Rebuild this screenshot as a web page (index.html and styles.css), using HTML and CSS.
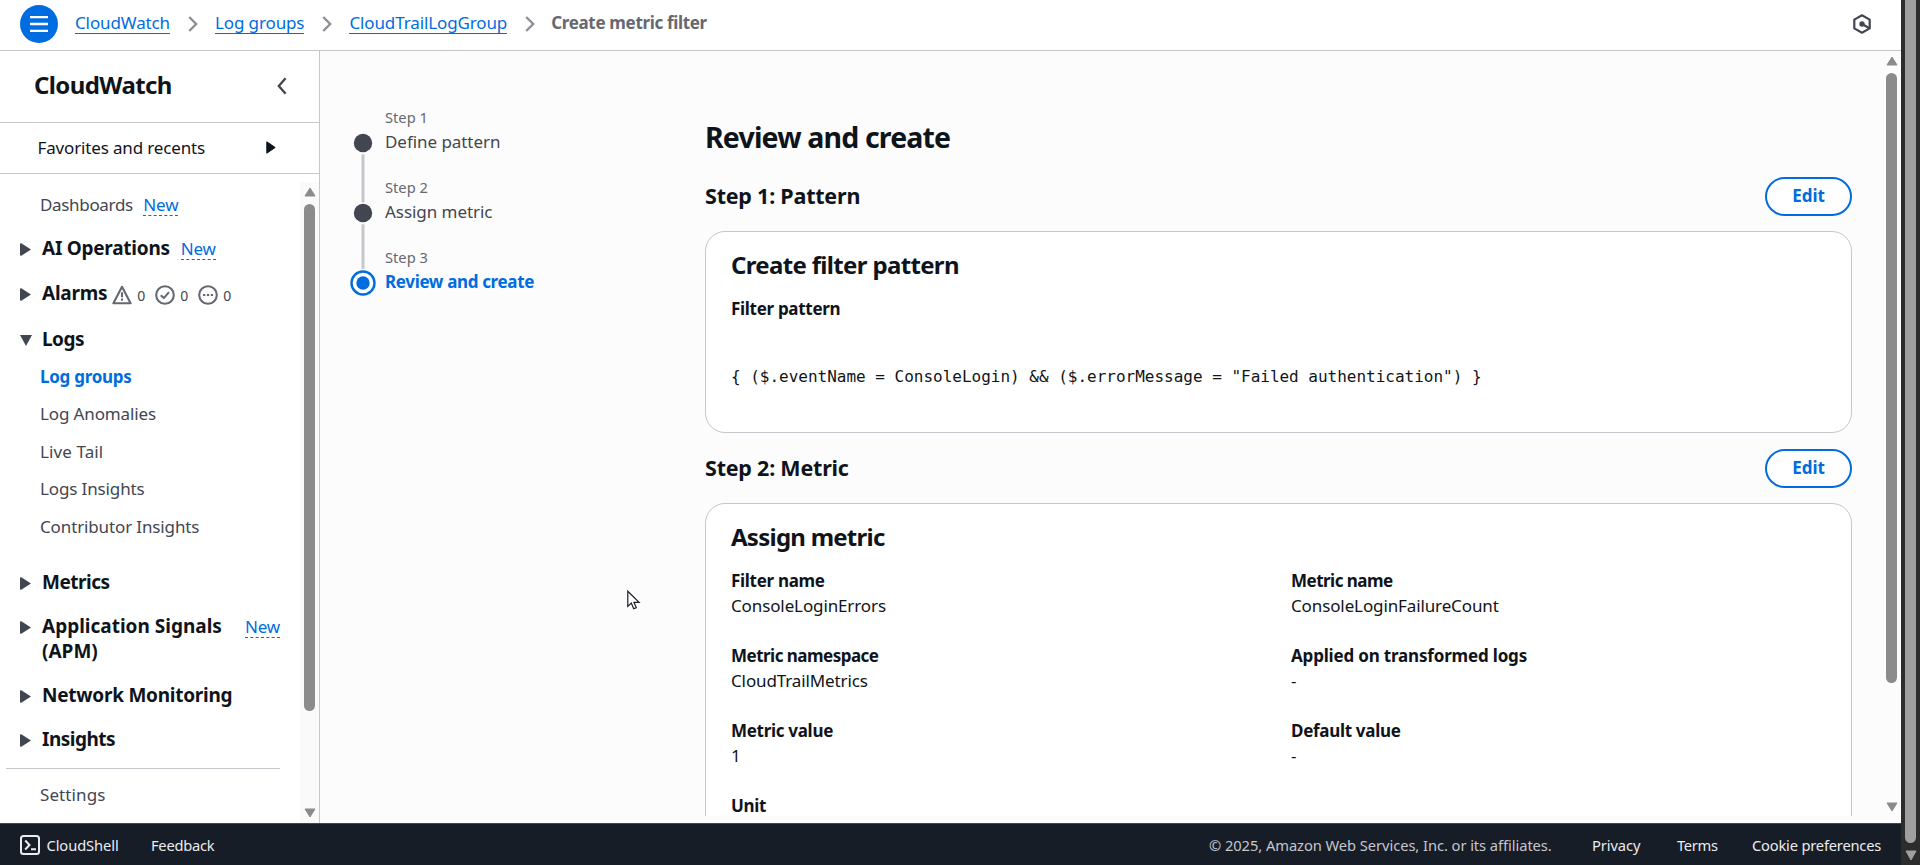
FILE: index.html
```html
<!DOCTYPE html>
<html lang="en">
<head>
<meta charset="utf-8">
<title>Create metric filter</title>
<link rel="stylesheet" href="styles.css">
</head>
<body>
<div class="window">
  <div class="console">
    <header class="topbar">
      <button class="menu" aria-label="Menu"><svg width="18" height="16" viewBox="0 0 18 16"><path d="M0 1.2h18M0 8h18M0 14.8h18" stroke="#fff" stroke-width="2.3"/></svg></button>
      <nav class="crumbs">
        <a class="crumb">CloudWatch</a>
        <svg class="sep" width="10" height="16" viewBox="0 0 10 16"><path d="M1.2 1l7 7-7 7"/></svg>
        <a class="crumb">Log groups</a>
        <svg class="sep" width="10" height="16" viewBox="0 0 10 16"><path d="M1.2 1l7 7-7 7"/></svg>
        <a class="crumb">CloudTrailLogGroup</a>
        <svg class="sep" width="10" height="16" viewBox="0 0 10 16"><path d="M1.2 1l7 7-7 7"/></svg>
        <span class="crumb-current">Create metric filter</span>
      </nav>
      <svg class="assist" width="20" height="20" viewBox="0 0 20 20"><path d="M10 1.3l7.7 4.3v8.8L10 18.7l-7.7-4.3V5.6z" fill="none" stroke="#424650" stroke-width="2.2" stroke-linejoin="round"/><circle cx="10" cy="10" r="2.7" fill="#424650"/><path d="M10 10l7 4" stroke="#424650" stroke-width="2.2"/></svg>
    </header>
    <div class="body">
      <aside class="sidebar">
        <div class="side-title"><h2>CloudWatch</h2><svg width="10" height="18" viewBox="0 0 10 18"><path d="M8.6 1.2L1.8 9l6.8 7.8" fill="none" stroke="#424650" stroke-width="2.3"/></svg></div>
        <div class="side-fav"><span>Favorites and recents</span><svg width="10" height="13" viewBox="0 0 10 13"><path d="M.8.8v11.4L9.2 6.5z" fill="#0f141a" stroke="#0f141a" stroke-linejoin="round"/></svg></div>
        <div class="side-scroll">
          <nav class="nav">
            <div class="row link first dash"><span>Dashboards</span><span class="new">New</span></div>
            <div class="row group g19 ai"><i class="tri"></i><b>AI Operations</b><span class="new">New</span></div>
            <div class="row group g20"><i class="tri"></i><b>Alarms</b>
              <span class="alarms">
                <svg width="20" height="20" viewBox="0 0 20 20"><path d="M10 1.8L1.4 18.2h17.2z"/><path d="M10 7.2v5M10 13.6v2.2"/></svg><em>0</em>
                <svg width="20" height="20" viewBox="0 0 20 20"><circle cx="10" cy="10" r="8.8"/><path d="M5.8 10.2l3 2.9 5.2-6"/></svg><em>0</em>
                <svg width="20" height="20" viewBox="0 0 20 20"><circle cx="10" cy="10" r="8.8"/><path d="M5 10h2.3M8.9 10h2.3M12.8 10h2.3"/></svg><em>0</em>
              </span>
            </div>
            <div class="row group g21 tight"><i class="tri open"></i><b>Logs</b></div>
            <div class="row link g12 active">Log groups</div>
            <div class="row link g12">Log Anomalies</div>
            <div class="row link g13 loose">Live Tail</div>
            <div class="row link g12">Logs Insights</div>
            <div class="row link g13">Contributor Insights</div>
            <div class="row group g31 tight"><i class="tri"></i><b>Metrics</b></div>
            <div class="row group g19 wide"><i class="tri"></i><b>Application Signals (APM)</b><span class="new">New</span></div>
            <div class="row group g19"><i class="tri"></i><b>Network Monitoring</b></div>
            <div class="row group g19 tight"><i class="tri"></i><b>Insights</b></div>
            <hr class="rule">
            <div class="row link g13 loose">Settings</div>
          </nav>
          <div class="bar side-bar"><svg class="arrow" width="12" height="10" viewBox="0 0 12 10"><path d="M6 1L11 9H1z"/></svg><div class="thumb side-thumb"></div><svg class="arrow end" width="12" height="10" viewBox="0 0 12 10"><path d="M6 9L11 1H1z"/></svg></div>
        </div>
      </aside>
      <main class="main">
        <ol class="steps">
          <li class="step"><svg width="26" height="76" viewBox="0 0 26 76"><circle cx="13" cy="13" r="9.2" fill="#424650"/><path d="M13 24.3v48" stroke="#c6c6cd" stroke-width="3"/></svg><div><small>Step 1</small><span>Define pattern</span></div></li>
          <li class="step"><svg width="26" height="76" viewBox="0 0 26 76"><circle cx="13" cy="13" r="9.2" fill="#424650"/><path d="M13 24.3v44.5" stroke="#c6c6cd" stroke-width="3"/></svg><div><small>Step 2</small><span>Assign metric</span></div></li>
          <li class="step current"><svg width="26" height="26" viewBox="0 0 26 26"><circle cx="13" cy="13" r="11.5" fill="#fff" stroke="#006ce0" stroke-width="2.4"/><circle cx="13" cy="13" r="6.7" fill="#006ce0"/></svg><div><small>Step 3</small><span>Review and create</span></div></li>
        </ol>
        <section class="content">
          <h1>Review and create</h1>
          <div class="section-head"><h2>Step 1: Pattern</h2><button class="edit">Edit</button></div>
          <div class="card pattern-card">
            <h3>Create filter pattern</h3>
            <div class="label">Filter pattern</div>
            <pre class="code">{ ($.eventName = ConsoleLogin) &amp;&amp; ($.errorMessage = "Failed authentication") }</pre>
          </div>
          <div class="section-head second"><h2>Step 2: Metric</h2><button class="edit">Edit</button></div>
          <div class="card metric-card">
            <h3 class="assign">Assign metric</h3>
            <dl class="fields">
              <div><dt>Filter name</dt><dd>ConsoleLoginErrors</dd></div>
              <div><dt class="narrow">Metric name</dt><dd>ConsoleLoginFailureCount</dd></div>
              <div><dt class="narrow">Metric namespace</dt><dd>CloudTrailMetrics</dd></div>
              <div><dt class="roomy">Applied on transformed logs</dt><dd>-</dd></div>
              <div><dt>Metric value</dt><dd>1</dd></div>
              <div><dt>Default value</dt><dd>-</dd></div>
              <div><dt>Unit</dt></div>
            </dl>
          </div>
        </section>
        <div class="bar main-bar"><svg class="arrow" width="12" height="10" viewBox="0 0 12 10"><path d="M6 1L11 9H1z"/></svg><div class="thumb main-thumb"></div><svg class="arrow end" width="12" height="10" viewBox="0 0 12 10"><path d="M6 9L11 1H1z"/></svg></div>
      </main>
    </div>
    <footer class="footer">
      <svg width="20" height="20" viewBox="0 0 20 20" fill="none" stroke="#ebebf0" stroke-width="2"><rect x="1" y="1" width="18" height="18" rx="2.5"/><path d="M5.2 5.5L9.5 10l-4.3 4.5M11 14.3h5"/></svg>
      <span class="shell">CloudShell</span>
      <span class="feedback">Feedback</span>
      <span class="copy">© 2025, Amazon Web Services, Inc. or its affiliates.</span>
      <span class="privacy">Privacy</span>
      <span class="terms">Terms</span>
      <span class="cookies">Cookie preferences</span>
    </footer>
  </div>
  <div class="outer-bar"><div class="outer-thumb"></div><svg width="12" height="11" viewBox="0 0 12 11"><path d="M6 10L11 1H1z" fill="#9f9f9f" stroke="#9f9f9f" stroke-linejoin="round"/></svg></div>
</div>
<svg class="cursor" width="14" height="20" viewBox="0 0 14 20"><path d="M.8 1.2v15.2l3.5-3.3 2.4 5.6 2.6-1.1-2.4-5.3h5.2z" fill="#fff" stroke="#1c1c26" stroke-width="1.2"/></svg>
</body>
</html>
```
FILE: styles.css
```css
* { box-sizing: border-box; }
body { margin: 0; overflow: hidden; font: 17px/25px "Noto Sans", sans-serif; letter-spacing: -0.12px; color: #0f141a; background: #fff; }
h1, h2, h3, dl, dd, ol, pre { margin: 0; padding: 0; }
button { font: inherit; padding: 0; }

.window { display: flex; width: 1920px; height: 865px; }
.console { display: flex; flex-direction: column; width: 1901px; }

.topbar { display: flex; align-items: center; height: 51px; padding: 0 29px 3px 20px; border-bottom: 1px solid #c6c6cd; flex: none; }
.menu { display: flex; align-items: center; justify-content: center; width: 38px; height: 38px; border: 0; border-radius: 50%; background: #006ce0; margin-right: 17px; }
.crumbs { display: flex; align-items: center; }
.crumb { color: #006ce0; height: 20px; line-height: 18px; border-bottom: 1px solid #006ce0; }
.sep { margin: 0 17px 0 18px; fill: none; stroke: #8c8c94; stroke-width: 2.3; }
.crumb-current { font-weight: 700; letter-spacing: -0.33px; color: #656871; line-height: 24px; margin: -2px 0 0 -1px; }
.assist { margin-left: auto; }

.body { display: flex; height: 772px; }
.sidebar { display: flex; flex-direction: column; width: 320px; border-right: 1px solid #c6c6cd; }
.side-title { display: flex; align-items: center; justify-content: space-between; height: 72px; padding: 0 32px 2px 34px; border-bottom: 1px solid #c6c6cd; flex: none; }
.side-title h2 { font-size: 24px; line-height: 30px; letter-spacing: -0.6px; padding-bottom: 2px; }
.side-fav { display: flex; align-items: center; justify-content: space-between; height: 51px; padding: 0 43px 2px 37.5px; letter-spacing: -0.15px; border-bottom: 1px solid #c6c6cd; flex: none; }
.side-scroll { display: flex; flex: 1; }
.nav { width: 300px; padding-right: 20px; }
.row { display: flex; min-height: 25px; }
.link { padding-left: 40px; color: #424650; letter-spacing: -0.13px; }
.loose { letter-spacing: 0.1px; }
.first { margin-top: 18px; }
.dash { letter-spacing: -0.33px; }
.dash .new { margin-left: 10.5px; }
.active { color: #006ce0; font-weight: 700; letter-spacing: -0.27px; }
.group { padding-left: 20px; }
.group b { font-size: 19px; letter-spacing: -0.25px; margin-left: 11px; }
.tight b { letter-spacing: -0.5px; }
.wide b { letter-spacing: 0; width: 192px; }
.g12 { margin-top: 12px; }
.g13 { margin-top: 13px; }
.g19 { margin-top: 19px; }
.g20 { margin-top: 20px; }
.g21 { margin-top: 21px; }
.g31 { margin-top: 31px; }
.tri { width: 11px; height: 13px; margin-top: 7px; background: #424650; clip-path: polygon(0 8%, 8% 0, 100% 50%, 8% 100%, 0 92%); }
.open { width: 12px; margin: 8px -1px 0 0; height: 11px; clip-path: polygon(0 0, 100% 0, 50% 100%); }
.new { color: #006ce0; height: 24px; letter-spacing: -0.2px; border-bottom: 1px dashed #006ce0; }
.ai .new { margin-left: 11px; }
.wide .new { margin-left: auto; }
.alarms { display: flex; align-items: center; height: 25px; margin-left: 5px; }
.alarms svg { fill: none; stroke: #656871; stroke-width: 2.1; stroke-linejoin: round; margin-top: 2px; }
.alarms em { font-style: normal; font-size: 14px; color: #424650; width: 13px; text-align: right; margin: 3px 10px 0 0; }
.rule { margin: 16px 0 0 6px; border: 0; height: 1px; background: #c6c6cd; }

.bar { display: flex; flex-direction: column; align-items: center; background: #fafafa; }
.arrow { fill: #8b8b8b; stroke: #8b8b8b; stroke-linejoin: round; flex: none; }
.end { margin-top: auto; }
.thumb { width: 11px; border-radius: 6px; background: #8b8b8b; flex: none; }
.side-bar { width: 19px; margin-top: 8px; padding: 5px 0; }
.side-thumb { height: 507px; margin-top: 7px; }

.main { display: flex; flex: 1; background: #fcfcfc; }
.steps { width: 385px; padding: 56px 0 0 29.5px; list-style: none; }
.step { display: flex; height: 70px; }
.step svg { margin-top: 23px; flex: none; overflow: visible; }
.step div { margin-left: 9.5px; }
.step small { display: block; font-size: 14.7px; line-height: 21px; margin-bottom: 1px; letter-spacing: 0; color: #656871; }
.step span { display: block; color: #424650; letter-spacing: -0.05px; }
.step.current span { font-weight: 700; color: #006ce0; letter-spacing: -0.34px; }

.content { width: 1147px; height: 765px; padding-top: 67px; overflow: hidden; }
h1 { font-size: 28.5px; line-height: 38px; letter-spacing: -0.84px; }
.section-head { display: flex; justify-content: space-between; align-items: center; height: 39px; margin: 21px 0 15px; }
.section-head h2 { font-size: 21.5px; letter-spacing: -0.22px; padding-bottom: 3px; }
.second { margin-top: 16px; }
.edit { width: 87px; height: 39px; padding-bottom: 2px; border: 2px solid #006ce0; border-radius: 20px; background: #fff; color: #006ce0; font-weight: 700; }
.card { border: 1px solid #c6c6cd; border-radius: 20px; background: #fff; padding: 19px 25px; }
.card h3 { font-size: 24px; line-height: 30px; letter-spacing: -0.66px; margin: -1px 0 16px; }
.card .assign { letter-spacing: -0.75px; }
.pattern-card { height: 202px; }
.label, dt { font-weight: 700; letter-spacing: -0.3px; }
.code { font: 16px/25px "DejaVu Sans Mono", monospace; letter-spacing: -0.01px; margin-top: 43px; }
.metric-card { height: 420px; }
.fields { display: grid; grid-template-columns: 560px 1fr; row-gap: 25px; }
.narrow { letter-spacing: -0.52px; }
.roomy { letter-spacing: -0.18px; }

.main-bar { width: 19px; height: 772px; margin-left: auto; padding: 5px 0 11px; background: #fcfcfc; }
.main-thumb { height: 610px; margin-top: 7px; }

.footer { display: flex; align-items: center; height: 42px; padding: 1px 20px 0; border-top: 1px solid #424650; background: #161d26; color: #ebebf0; font-size: 14.7px; letter-spacing: -0.1px; line-height: 20px; }
.footer span { padding-bottom: 1px; white-space: nowrap; }
.shell { margin-left: 6.5px; width: 104.5px; }
.feedback { letter-spacing: -0.25px; }
.copy { margin-left: auto; width: 383px; letter-spacing: -0.06px; color: #c6c6cd; }
.privacy { width: 85px; }
.terms { width: 75px; letter-spacing: -0.3px; }
.cookies { width: 129px; letter-spacing: -0.2px; }

.outer-bar { display: flex; flex-direction: column; align-items: center; width: 19px; background: #2c2c2c; }
.outer-thumb { width: 11px; height: 843px; margin-bottom: 7px; border-radius: 0 0 6px 6px; background: #9f9f9f; }
.cursor { position: absolute; left: 627px; top: 590px; }
```
